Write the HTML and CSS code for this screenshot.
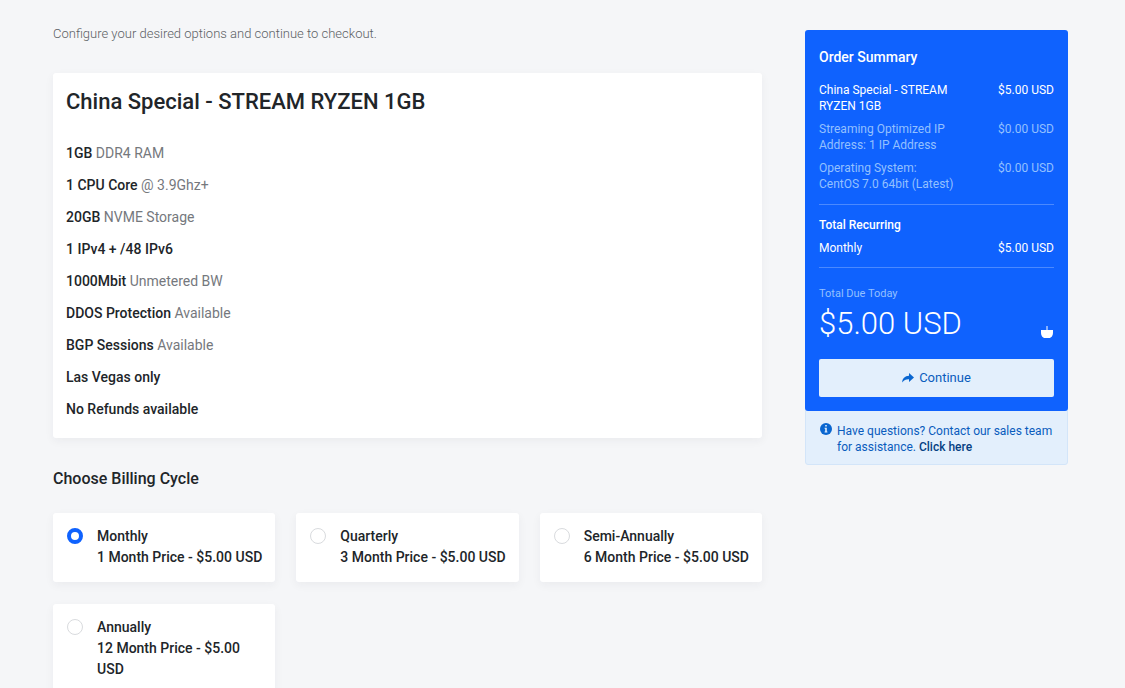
FILE: index.html
```html
<!DOCTYPE html>
<html lang="en">
<head>
<meta charset="utf-8">
<meta name="viewport" content="width=device-width, initial-scale=1">
<title>Configure</title>
<link rel="stylesheet" href="styles.css">
</head>
<body>
<form class="page">
  <main class="main">
    <p class="intro">Configure your desired options and continue to checkout.</p>
    <section class="card product">
      <h1 class="product-title">China Special - STREAM RYZEN 1GB</h1>
      <ul class="features">
        <li><strong>1GB</strong> DDR4 RAM</li>
        <li><strong>1 CPU Core</strong> @ 3.9Ghz+</li>
        <li><strong>20GB</strong> NVME Storage</li>
        <li><strong>1 IPv4 + /48 IPv6</strong></li>
        <li><strong>1000Mbit</strong> Unmetered BW</li>
        <li><strong>DDOS Protection</strong> Available</li>
        <li><strong>BGP Sessions</strong> Available</li>
        <li><strong>Las Vegas only</strong></li>
        <li><strong>No Refunds available</strong></li>
      </ul>
    </section>
    <h2 class="section-title">Choose Billing Cycle</h2>
    <div class="cycles">
      <label class="card cycle"><input class="radio" type="radio" name="cycle" checked><span>Monthly<br>1 Month Price - $5.00 USD</span></label>
      <label class="card cycle"><input class="radio" type="radio" name="cycle"><span>Quarterly<br>3 Month Price - $5.00 USD</span></label>
      <label class="card cycle"><input class="radio" type="radio" name="cycle"><span>Semi-Annually<br>6 Month Price - $5.00 USD</span></label>
      <label class="card cycle"><input class="radio" type="radio" name="cycle"><span>Annually<br>12 Month Price - $5.00 USD</span></label>
    </div>
  </main>
  <aside class="sidebar">
    <section class="summary">
      <h2 class="summary-title">Order Summary</h2>
      <div class="lines">
        <div class="line"><span class="line-name">China Special - STREAM RYZEN 1GB</span><span>$5.00 USD</span></div>
        <div class="line faded"><span class="line-name">Streaming Optimized IP Address: 1 IP Address</span><span>$0.00 USD</span></div>
        <div class="line faded"><span class="line-name">Operating System: CentOS 7.0 64bit (Latest)</span><span>$0.00 USD</span></div>
      </div>
      <div class="lines recurring">
        <strong>Total Recurring</strong>
        <div class="line"><span>Monthly</span><span>$5.00 USD</span></div>
      </div>
      <div class="due">
        <div>
          <div class="due-label">Total Due Today</div>
          <div class="due-amount">$5.00 USD</div>
        </div>
        <svg class="basket" viewBox="0 0 12 12" aria-hidden="true"><path d="M5.500 0h1v4H12v2.500c0 3-1.500 5.500-4 5.500H4C1.500 12 0 9.500 0 6.500V4h5.500z" fill="#fff"/></svg>
      </div>
      <button class="continue" type="submit">
        <svg class="arrow" viewBox="0 0 12 10" aria-hidden="true"><path d="M7 0l5 4.500L7 9V6.300C4 6.200 2 7 .3 9.500 0 5.500 3 2.800 7 2.700z" fill="#0a66d0"/></svg>
        Continue
      </button>
    </section>
    <div class="help">
      <svg class="info" viewBox="0 0 12 12" aria-hidden="true"><circle cx="6" cy="6" r="6" fill="#0a66d0"/><path d="M5.200 2h1.600v1.500H5.200zM4.600 4.800h2.200V8.500h.6v1H4.600v-1h.6V5.800h-.6z" fill="#e3effc"/></svg>
      <p class="help-text">Have questions? Contact our sales team for assistance. <a class="help-link" href="#contact">Click here</a></p>
    </div>
  </aside>
</form>
</body>
</html>
```

FILE: styles.css
```css
* { box-sizing: border-box; }
body {
  margin: 0;
  background: #f5f6f8;
  color: #212529;
  font: 14px/20px Roboto, "Liberation Sans", sans-serif;
}
h1, h2, p, ul { margin: 0; padding: 0; font-weight: 500; }
.page {
  display: grid;
  grid-template-columns: minmax(0, 1fr) 263px;
  gap: 43px;
  align-items: start;
  padding: 24px 57px 22px 53px;
}
.card {
  background: #fff;
  border-radius: 3px;
  box-shadow: 0 3px 10px rgba(30, 40, 60, .05);
}
.intro {
  margin-bottom: 29px;
  color: #5c5f64;
  font-size: 13px;
  font-weight: 300;
}
.product { padding: 15px 13px 19px; }
.product-title {
  margin-bottom: 27px;
  font-size: 22px;
  line-height: 28px;
}
.features {
  display: grid;
  gap: 12px;
  list-style: none;
  color: #75787d;
  font-weight: 400;
}
.features strong { color: #212529; font-weight: 500; }
.section-title {
  margin: 29px 0 22px;
  font-size: 16px;
  line-height: 24px;
}
.cycles {
  display: grid;
  grid-template-columns: repeat(3, minmax(0, 1fr));
  gap: 22px 21px;
}
.cycle {
  display: flex;
  align-items: flex-start;
  gap: 14px;
  padding: 13px 13px 14px 14px;
  font-weight: 500;
  line-height: 21px;
}
.radio {
  appearance: none;
  flex: none;
  width: 16px;
  height: 16px;
  margin: 2px 0 0;
  border: 1px solid #d9dbde;
  border-radius: 50%;
  background: #fff;
}
.radio:checked { border: 4px solid #0f62fe; }
.sidebar { padding-top: 6px; }
.summary {
  position: relative;
  padding: 17px 14px 14px;
  border-radius: 3px;
  background: #0f62fe;
  color: #fff;
  font-size: 12px;
  line-height: 16px;
}
.summary-title {
  margin-bottom: 15px;
  font-size: 14px;
  line-height: 20px;
}
.lines {
  display: grid;
  gap: 7px;
  padding-bottom: 12px;
  border-bottom: 1px solid #4b89fe;
}
.recurring { padding: 12px 0 11px; }
.recurring strong { font-weight: 500; }
.line { display: flex; justify-content: space-between; gap: 16px; }
.line-name { max-width: 140px; }
.faded, .due-label { color: #93c0ff; }
.due {
  display: flex;
  justify-content: space-between;
  align-items: flex-end;
  padding: 18px 0 17px;
}
.due-label { font-size: 11px; }
.due-amount {
  margin-top: 4px;
  font-size: 31px;
  font-weight: 300;
  line-height: 36px;
}
.basket { width: 12px; height: 12px; margin: 0 1px 4px 0; }
.continue {
  display: flex;
  align-items: center;
  justify-content: center;
  gap: 5px;
  width: 100%;
  height: 38px;
  padding: 0;
  border: 0;
  border-radius: 2px;
  background: #e3effc;
  color: #0a5cbd;
  font: inherit;
  font-size: 13px;
}
.arrow { width: 12px; height: 10px; }
.help {
  display: flex;
  gap: 5px;
  margin-top: -3px;
  padding: 14px 10px 9px 14px;
  border: 1px solid #d3e5f9;
  border-radius: 3px;
  background: #e3effc;
  color: #0a5cbd;
  font-size: 12px;
  line-height: 16px;
}
.info { flex: none; width: 12px; height: 12px; }
.help-text { font-weight: 400; }
.help-link { color: #063f83; font-weight: 500; text-decoration: none; }
```
